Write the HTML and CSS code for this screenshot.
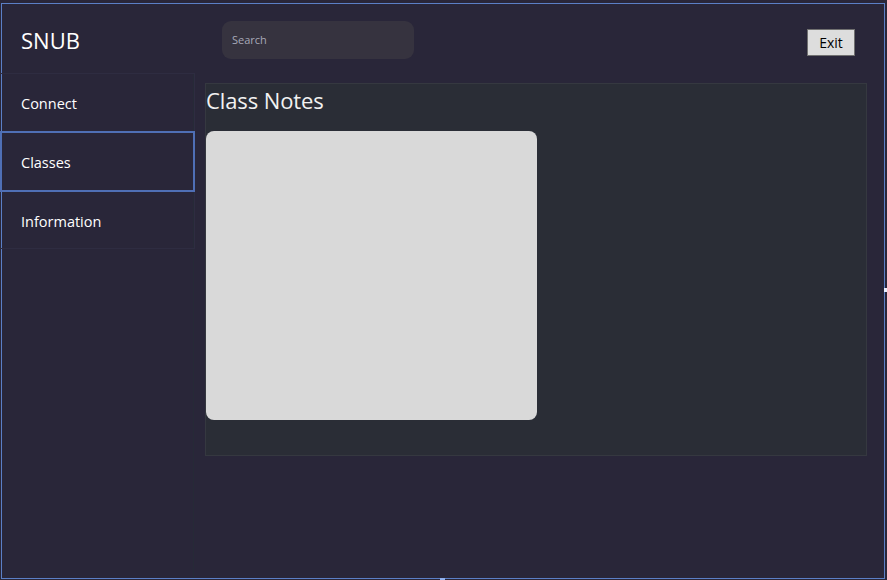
FILE: index.html
```html
<!DOCTYPE html>
<html>
<head>
<meta charset="utf-8">
<link rel="stylesheet" href="styles.css">
</head>
<body>
<div class="window">
  <header class="topbar">
    <div class="brand">SNUB</div>
    <div class="search">Search</div>
    <button class="exit">Exit</button>
  </header>
  <div class="main">
    <nav class="sidebar">
      <ul class="nav">
        <li class="nav-item">Connect</li>
        <li class="nav-item active">Classes</li>
        <li class="nav-item">Information</li>
      </ul>
    </nav>
    <section class="panel">
      <h1 class="title">Class Notes</h1>
      <div class="card"></div>
    </section>
  </div>
  <span class="grip grip-right"></span>
  <span class="grip grip-bottom"></span>
</div>
</body>
</html>
```
FILE: styles.css
```css
* { box-sizing: border-box; }
html, body {
  margin: 0;
  padding: 0;
  background: #292639;
  width: 887px;
  height: 580px;
  overflow: hidden;
  font-family: "Open Sans", "Noto Sans", sans-serif;
  color: #ffffff;
}
.window {
  position: relative;
  margin: 3px 0 0 1px;
  width: 884px;
  height: 576px;
  border: 1px solid #5b7fc6;
  display: flex;
  flex-direction: column;
}
.topbar {
  height: 69px;
  display: flex;
  align-items: center;
  padding: 0 29px 0 19px;
  flex-shrink: 0;
}
.brand {
  font-size: 22px;
  width: 201px;
  margin-top: 2px;
}
.search {
  width: 192px;
  height: 38px;
  border-radius: 9px;
  background: #36333f;
  color: #a7a9b8;
  font-size: 11px;
  padding: 0 10px;
  display: flex;
  align-items: center;
  margin-top: 2px;
}
.exit {
  margin-left: auto;
  width: 48px;
  height: 27px;
  margin-top: 7px;
  background: #dddddd;
  border: 1px solid #707070;
  font-family: "Open Sans", "Noto Sans", sans-serif;
  font-size: 14px;
  color: #000000;
  padding: 0;
  border-radius: 0;
}
.main {
  flex: 1;
  display: flex;
  align-items: flex-start;
}
.sidebar {
  width: 192px;
  align-self: stretch;
  border-right: 1px solid #262a37;
  flex-shrink: 0;
}
.nav {
  list-style: none;
  margin: 0 0 0 -2px;
  padding: 0;
  width: 195px;
  border: 1px solid #2e2c41;
  border-left: none;
}
.nav-item {
  height: 57px;
  display: flex;
  align-items: center;
  padding: 2px 0 0 19px;
  font-size: 14.5px;
  border: 2px solid transparent;
}
.nav-item.active {
  height: 61px;
  margin-right: -1px;
  border-color: #4f6fb5;
}
.nav-item:last-child {
  height: 56px;
}
.panel {
  margin: 10px 0 0 11px;
  width: 662px;
  height: 373px;
  background: #2a2d36;
  border: 1px solid #353840;
}
.title {
  margin: 1px 0 0 0;
  font-size: 22px;
  font-weight: 400;
  line-height: 30px;
  color: #f2f2f2;
  letter-spacing: -0.1px;
}
.card {
  margin-top: 16px;
  width: 331px;
  height: 289px;
  background: #d9d9d9;
  border-radius: 8px;
}
.grip {
  position: absolute;
  background: #e8eeff;
}
.grip-right {
  right: -3px;
  top: 284px;
  width: 3px;
  height: 4px;
}
.grip-bottom {
  bottom: -2px;
  left: 438px;
  width: 5px;
  height: 2px;
  background: #8fb0ee;
}
```
